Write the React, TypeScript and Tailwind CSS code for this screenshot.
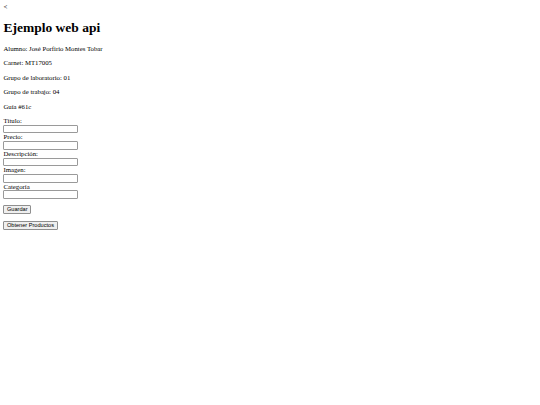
const fields = ["Título:", "Precio:", "Descripción:", "Imagen:", "Categoría"];

const info = [
  "Alumno: José Porfirio Montes Tobar",
  "Carnet: MT17005",
  "Grupo de laboratorio: 01",
  "Grupo de trabajo: 04",
  "Guía #61c",
];

const App = () => {
  return (
    <div className="min-h-[405px] bg-white p-[3.4px] text-black font-['Liberation_Serif',serif]">
      <div className="text-[6.75px] leading-[7.75px]">&lt;</div>
      <h1 className="text-[13.5px] leading-[15.5px] font-bold my-[9px]">Ejemplo web api</h1>
      {info.map((t) => (
        <p key={t} className="text-[6.75px] leading-[7.75px] my-[6.75px]">
          {t}
        </p>
      ))}
      <form className="flex flex-col items-start mt-[6.5px]" onSubmit={(e) => e.preventDefault()}>
        {fields.map((f) => (
          <div key={f} className="flex flex-col items-start">
            <label className="text-[6.75px] leading-[7.75px]">{f}</label>
            <input
              type="text"
              className="w-[75px] h-[8.6px] bg-white border border-[#9a9a9a] rounded-[1px] outline-none"
            />
          </div>
        ))}
        <button
          type="submit"
          className="mt-[6px] h-[9px] px-[2.6px] bg-[#efefef] border border-[#8f8f8f] rounded-[1px] text-[5.6px] leading-none font-['Liberation_Sans',sans-serif]"
        >
          Guardar
        </button>
      </form>
      <button
        type="button"
        className="block mt-[7px] h-[9px] px-[2.6px] bg-[#efefef] border border-[#8f8f8f] rounded-[1px] text-[5.6px] leading-none font-['Liberation_Sans',sans-serif]"
      >
        Obtener Productos
      </button>
    </div>
  );
};

export default App;
